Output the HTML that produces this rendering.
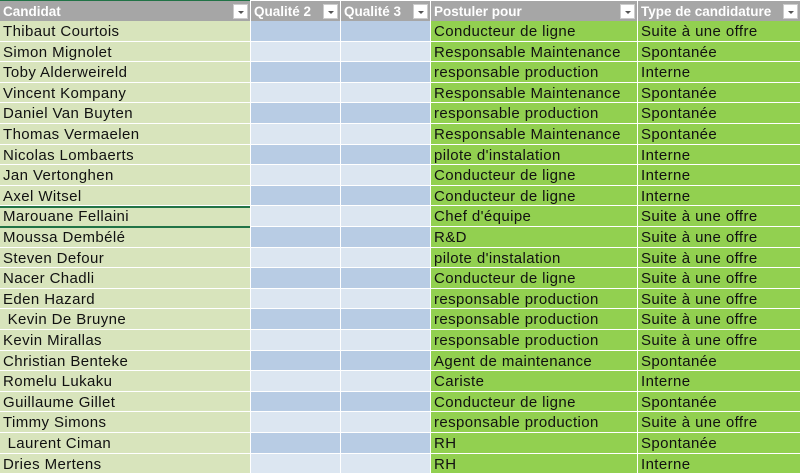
<!DOCTYPE html>
<html><head><style>
body{margin:0;width:800px;height:474px;overflow:hidden;background:#fff;font-family:"Liberation Sans",sans-serif;font-size:15px;letter-spacing:0.4px;}
#t{position:absolute;left:0;top:0;width:800px;height:474px;}
.r{position:absolute;left:0;width:800px;height:20.6px;}
.c{position:absolute;top:0;height:19.6px;line-height:21px;padding-left:3px;box-sizing:border-box;white-space:pre;overflow:hidden;color:#111;}
.h .c{background:#a6a6a6;color:#fff;font-weight:bold;font-size:13.5px;letter-spacing:0;line-height:21px;}
.dd{position:absolute;right:2px;top:3px;width:15px;height:15px;background:#fff;border:1px solid #ccc;box-sizing:border-box;}
.dd:after{content:"";position:absolute;left:4px;top:6px;border-left:3px solid transparent;border-right:3px solid transparent;border-top:3px solid #555;}
</style></head><body>
<div style="position:absolute;left:0;top:0;width:250px;height:2px;background:#217346"></div>
<div id="t"></div>
<script>
(function(){
var cols=[[0,250],[251,89],[341,89],[431,206],[638,162]];
var names=["Thibaut Courtois","Simon Mignolet","Toby Alderweireld","Vincent Kompany","Daniel Van Buyten","Thomas Vermaelen","Nicolas Lombaerts","Jan Vertonghen","Axel Witsel","Marouane Fellaini","Moussa Dembélé","Steven Defour","Nacer Chadli","Eden Hazard"," Kevin De Bruyne","Kevin Mirallas","Christian Benteke","Romelu Lukaku","Guillaume Gillet","Timmy Simons"," Laurent Ciman","Dries Mertens"];
var post=["Conducteur de ligne","Responsable Maintenance","responsable production","Responsable Maintenance","responsable production","Responsable Maintenance","pilote d'instalation","Conducteur de ligne","Conducteur de ligne","Chef d'équipe","R&amp;D","pilote d'instalation","Conducteur de ligne","responsable production","responsable production","responsable production","Agent de maintenance","Cariste","Conducteur de ligne","responsable production","RH","RH"];
var typ=["Suite à une offre","Spontanée","Interne","Spontanée","Spontanée","Spontanée","Interne","Interne","Interne","Suite à une offre","Suite à une offre","Suite à une offre","Suite à une offre","Suite à une offre","Suite à une offre","Suite à une offre","Spontanée","Interne","Spontanée","Suite à une offre","Spontanée","Interne"];
var h='<div class="r h" style="top:1px;height:20px">';
var hd=["Candidat","Qualité 2","Qualité 3","Postuler pour","Type de candidature"];
for(var i=0;i<5;i++)h+='<div class="c" style="left:'+cols[i][0]+'px;width:'+cols[i][1]+'px">'+hd[i]+'<div class="dd"></div></div>';
h+='</div>';
for(var r=0;r<22;r++){
 var yy=21+r*20.6;
 var bl=r%2==0?'#b8cce4':'#dce6f1';
 var bg=['#d8e4bc',bl,bl,'#92d050','#92d050'];
 var tx=[names[r],'','',post[r],typ[r]];
 h+='<div class="r" style="top:'+yy+'px">';
 for(var i=0;i<5;i++)h+='<div class="c" style="left:'+cols[i][0]+'px;width:'+cols[i][1]+'px;background:'+bg[i]+'">'+tx[i]+'</div>';
 h+='</div>';
}
h+='<div style="position:absolute;left:0;top:206px;width:250px;height:22px;border-top:2px solid #217346;border-bottom:2px solid #217346;box-sizing:border-box"></div>';
document.getElementById('t').innerHTML=h;
})();
</script>
</body></html>
